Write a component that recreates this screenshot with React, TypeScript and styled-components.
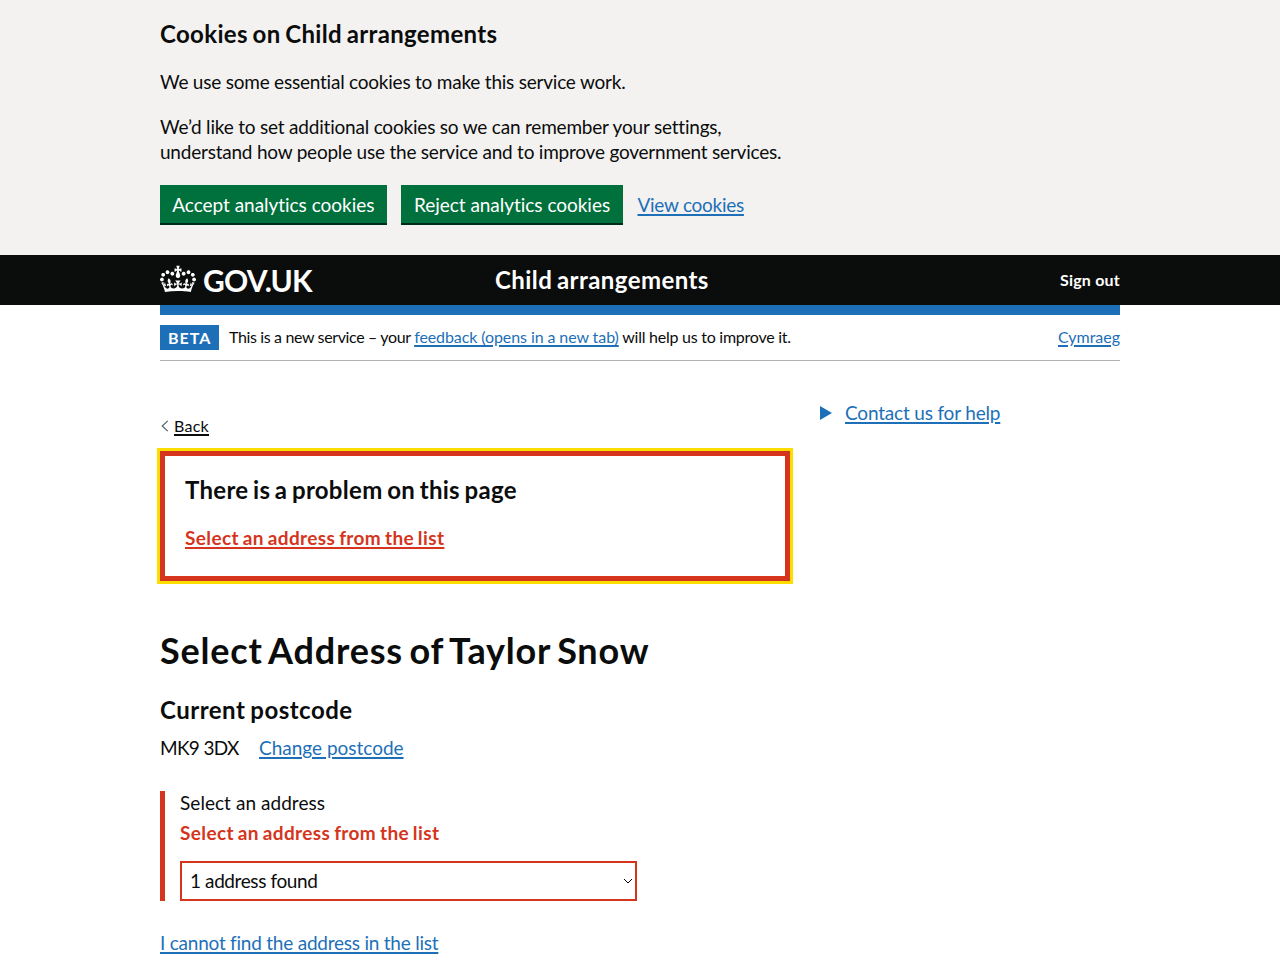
import React from "react";
import styled, { createGlobalStyle, css } from "styled-components";

const GlobalStyle = createGlobalStyle`
  body {
    margin: 0;
    background: #fff;
    color: #0b0c0c;
    font-family: Lato, "Liberation Sans", sans-serif;
    font-size: 19px;
    line-height: 25px;
    font-variant-ligatures: none;
    -webkit-font-smoothing: antialiased;
    overflow: hidden;
  }
`;

type Tracked = { $track?: number; $word?: number };
const tracking = css<Tracked>`
  letter-spacing: ${(p) => p.$track ?? 0}px;
  word-spacing: ${(p) => p.$word ?? 0}px;
`;

const Width = styled.div`
  width: 960px;
  margin: 0 auto;
`;

const CookieBanner = styled.section`
  box-sizing: border-box;
  height: 255px;
  padding-top: 19px;
  background: #f3f2f1;
`;

const Heading = styled.h2<Tracked>`
  margin: 0;
  font-size: 24px;
  line-height: 30px;
  font-weight: 700;
  white-space: nowrap;
  ${tracking}
`;

const Paragraph = styled.p<Tracked>`
  margin: 20px 0 0;
  white-space: nowrap;
  ${tracking}
`;

const Line = styled.span<Tracked>`
  display: block;
  ${tracking}
`;

const ButtonRow = styled.div`
  display: flex;
  align-items: flex-start;
  margin-top: 21px;
`;

const Button = styled.button<Tracked & { $width: number }>`
  box-sizing: border-box;
  width: ${(p) => p.$width}px;
  height: 38px;
  margin: 0 14.6px 0 0;
  padding: 0;
  border: 0;
  background: #00703c;
  box-shadow: 0 2px 0 #002d18;
  color: #fff;
  font: inherit;
  line-height: 25px;
  white-space: nowrap;
  ${tracking}
`;

const Link = styled.a<Tracked & { $tone?: string; $bold?: boolean }>`
  color: ${(p) => p.$tone ?? "#1d70b8"};
  font-weight: ${(p) => (p.$bold ? 700 : 400)};
  text-decoration: underline;
  text-decoration-thickness: 1.5px;
  text-underline-offset: 2px;
  white-space: nowrap;
  ${tracking}
`;

const ButtonLink = styled(Link)`
  padding-top: 7px;
`;

const Header = styled.header`
  background: #0b0c0c;
  color: #fff;
`;

const HeaderRow = styled(Width)`
  display: flex;
  align-items: center;
  height: 50px;
`;

const Logo = styled.div`
  display: flex;
  align-items: center;
  width: 335px;
`;

const CrownDrawing = styled.svg`
  margin-bottom: 2px;
`;

const LogoText = styled.span<Tracked>`
  margin-left: 7px;
  font-size: 30px;
  line-height: 30px;
  font-weight: 700;
  ${tracking}
`;

const ServiceName = styled.span<Tracked>`
  flex: 1;
  padding-bottom: 1px;
  font-size: 24px;
  line-height: 30px;
  font-weight: 700;
  ${tracking}
`;

const SignOut = styled.a<Tracked>`
  font-size: 16px;
  line-height: 20px;
  font-weight: 700;
  ${tracking}
`;

const BlueBar = styled(Width)`
  height: 10px;
  background: #1d70b8;
`;

const PhaseBanner = styled(Width)`
  display: flex;
  align-items: center;
  box-sizing: border-box;
  height: 46px;
  border-bottom: 1px solid #b1b4b6;
  font-size: 16px;
  line-height: 20px;
`;

const Tag = styled.strong`
  box-sizing: border-box;
  width: 59px;
  height: 25px;
  padding-left: 8px;
  margin-right: 10px;
  background: #1d70b8;
  color: #fff;
  line-height: 26px;
  letter-spacing: 1px;
`;

const PhaseText = styled.span<Tracked>`
  flex: 1;
  padding-bottom: 1px;
  white-space: pre;
  ${tracking}
`;

const Language = styled.span`
  padding-bottom: 1px;
`;

const Piece = styled.span<Tracked>`
  ${tracking}
`;

const Columns = styled(Width)`
  display: grid;
  grid-template-columns: 630px 300px;
  column-gap: 30px;
  padding-top: 40px;
`;

const BackLink = styled.div`
  display: flex;
  align-items: center;
  height: 20px;
  margin-top: 15px;
  font-size: 16px;
  line-height: 20px;
`;

const BackArrow = styled.svg`
  width: 8px;
  height: 12px;
  margin: 0 5px 0 1px;
`;

const ErrorSummary = styled.section`
  box-sizing: border-box;
  height: 130px;
  margin-top: 15px;
  padding: 19px 20px 20px;
  border: 5px solid #d4351c;
  outline: 3px solid #fd0;
`;

const ErrorItem = styled.div`
  margin-top: 20px;
`;

const Title = styled.h1<Tracked>`
  margin: 49px 0 0;
  font-size: 36px;
  line-height: 40px;
  font-weight: 700;
  ${tracking}
`;

const Subheading = styled(Heading)`
  margin-top: 25px;
`;

const Postcode = styled.div`
  display: flex;
  margin-top: 10px;
`;

const PostcodeValue = styled.span<Tracked>`
  width: 99px;
  ${tracking}
`;

const FormGroup = styled.div`
  display: flex;
  flex-direction: column;
  justify-content: flex-end;
  box-sizing: border-box;
  height: 110px;
  margin-top: 31px;
  padding-left: 15px;
  border-left: 5px solid #d4351c;
`;

const Label = styled.label<Tracked>`
  display: block;
  ${tracking}
`;

const ErrorMessage = styled.p<Tracked>`
  margin: 5px 0 16px;
  color: #d4351c;
  font-weight: 700;
  ${tracking}
`;

const SelectBox = styled.div`
  position: relative;
  width: 457.3px;
`;

const Select = styled.select<Tracked>`
  display: block;
  appearance: none;
  box-sizing: border-box;
  width: 100%;
  height: 40px;
  padding: 4px 8px 6px;
  border: 2px solid #d4351c;
  border-radius: 0;
  background: #fff;
  color: #0b0c0c;
  font: inherit;
  ${tracking}
`;

const SelectArrow = styled.svg`
  position: absolute;
  top: 17px;
  left: 443px;
  pointer-events: none;
`;

const NotFound = styled.div`
  margin-top: 29px;
`;

const Summary = styled.div`
  display: flex;
  align-items: flex-start;
  height: 25px;
  line-height: 23px;
`;

const Triangle = styled.span`
  margin: 5px 13px 0 0;
  border-style: solid;
  border-width: 7px 0 7px 12.124px;
  border-color: transparent transparent transparent #1d70b8;
`;

const Crown = () => (
  <CrownDrawing width="36" height="30" viewBox="0 0 132 97" fill="#fff" aria-hidden="true">
    <path d="M25 30.2c3.5 1.5 7.7-.2 9.1-3.7 1.5-3.6-.2-7.8-3.9-9.2-3.6-1.4-7.6.3-9.1 3.9-1.4 3.5.3 7.5 3.9 9zM9 39.5c3.6 1.5 7.8-.2 9.2-3.7 1.5-3.6-.2-7.8-3.9-9.1-3.6-1.5-7.6.2-9.1 3.8-1.4 3.5.3 7.5 3.8 9zM4.4 57.2c3.5 1.5 7.7-.2 9.1-3.8 1.5-3.6-.2-7.7-3.9-9.1-3.5-1.5-7.6.3-9.1 3.8-1.4 3.5.3 7.6 3.9 9.1zm38.3-21.4c3.5 1.5 7.7-.2 9.1-3.8 1.5-3.6-.2-7.7-3.9-9.1-3.6-1.5-7.6.3-9.1 3.8-1.3 3.6.4 7.7 3.9 9.1zm64.4-5.6c-3.6 1.5-7.8-.2-9.1-3.7-1.5-3.6.2-7.8 3.8-9.2 3.6-1.4 7.7.3 9.2 3.9 1.3 3.5-.4 7.5-3.9 9zm15.9 9.3c-3.6 1.5-7.7-.2-9.1-3.7-1.5-3.6.2-7.8 3.7-9.1 3.6-1.5 7.7.2 9.2 3.8 1.5 3.5-.3 7.5-3.8 9zm4.7 17.7c-3.6 1.5-7.8-.2-9.2-3.8-1.5-3.6.2-7.7 3.9-9.1 3.6-1.5 7.7.3 9.2 3.8 1.3 3.5-.4 7.6-3.9 9.1zM89.3 35.8c-3.6 1.5-7.8-.2-9.2-3.8-1.4-3.6.2-7.7 3.9-9.1 3.6-1.5 7.7.3 9.2 3.8 1.4 3.6-.3 7.7-3.9 9.1zM69.7 17.7l8.9 4.7V9.3l-8.9 2.8c-.2-.3-.5-.6-.9-.9L72.4 0H59.6l3.5 11.2c-.3.3-.6.5-.9.9l-8.8-2.8v13.1l8.8-4.7c.3.3.6.7.9.9l-5 15.4v.1c-.2.8-.4 1.6-.4 2.4 0 4.1 3.1 7.5 7 8.1h.2c.3 0 .7.1 1 .1.4 0 .7 0 1-.1h.2c4-.6 7.1-4.1 7.1-8.1 0-.8-.1-1.7-.4-2.4V34l-5.1-15.4c.4-.2.7-.6 1-.9zM66 92.8c16.9 0 32.8 1.1 47.1 3.2 4-16.9 8.9-26.7 14-33.5l-9.6-3.4c1 4.9 1.1 7.2 0 10.2-1.5-1.4-3-4.3-4.2-8.7L108.6 76c2.8-2 5-3.2 7.5-3.3-4.4 9.4-10 11.9-13.6 11.2-4.3-.8-6.3-4.6-5.6-7.9 1-4.7 5.7-5.9 8-.5 4.3-8.7-3-11.4-7.6-8.8 7.1-7.2 7.9-13.5 2.1-21.1-8 6.1-8.1 12.3-4.5 20.8-4.7-5.4-12.1-2.5-9.5 6.2 3.4-5.2 7.9-2 7.2 3.1-.6 4.3-6.4 7.8-13.5 7.2-10.3-.9-10.9-8-11.2-13.8 2.5-.5 7.1 1.8 11 7.3L80.2 60c-4.1 4.4-8 5.3-12.3 5.4 1.4-4.4 8-11.6 8-11.6H55.5s6.4 7.2 7.9 11.6c-4.2-.1-8-1-12.3-5.4l1.4 16.4c3.9-5.5 8.5-7.7 10.9-7.3-.3 5.8-.9 12.8-11.1 13.8-7.2.6-12.9-2.9-13.5-7.2-.7-5 3.8-8.3 7.1-3.1 2.7-8.7-4.6-11.6-9.4-6.2 3.7-8.5 3.6-14.7-4.6-20.8-5.8 7.6-5 13.9 2.2 21.1-4.7-2.6-11.9.1-7.7 8.8 2.3-5.5 7.1-4.2 8.1.5.7 3.3-1.3 7.1-5.7 7.9-3.5.7-9-1.8-13.5-11.2 2.5.1 4.7 1.3 7.5 3.3l-4.7-15.4c-1.2 4.4-2.7 7.2-4.3 8.7-1.1-3-.9-5.3 0-10.2l-9.5 3.4c5 6.9 9.9 16.7 14 33.5 14.8-2.1 30.8-3.2 47.7-3.2z" />
  </CrownDrawing>
);

export default function App() {
  return (
    <>
      <GlobalStyle />
      <CookieBanner>
        <Width>
          <Heading $track={0.34} $word={-1.5}>Cookies on Child arrangements</Heading>
          <Paragraph $track={-0.22}>We use some essential cookies to make this service work.</Paragraph>
          <Paragraph>
            <Line $track={-0.2}>We’d like to set additional cookies so we can remember your settings,</Line>
            <Line $track={-0.22}>understand how people use the service and to improve government services.</Line>
          </Paragraph>
          <ButtonRow>
            <Button $width={226.6} $track={-0.03}>Accept analytics cookies</Button>
            <Button $width={221.7} $track={-0.03}>Reject analytics cookies</Button>
            <ButtonLink $track={-0.27}>View cookies</ButtonLink>
          </ButtonRow>
        </Width>
      </CookieBanner>
      <Header>
        <HeaderRow>
          <Logo>
            <Crown />
            <LogoText $track={-0.8}>GOV.UK</LogoText>
          </Logo>
          <ServiceName $track={0.43} $word={-1.5}>Child arrangements</ServiceName>
          <SignOut $track={0.21}>Sign out</SignOut>
        </HeaderRow>
      </Header>
      <BlueBar />
      <PhaseBanner>
        <Tag>BETA</Tag>
        <PhaseText>
          <Piece $track={-0.36}>{"This is a new service – your "}</Piece>
          <Link $track={-0.09}>feedback (opens in a new tab)</Link>
          <Piece $track={-0.25}>{" will help us to improve it."}</Piece>
        </PhaseText>
        <Language>
          <Link $track={-0.03}>Cymraeg</Link>
        </Language>
      </PhaseBanner>
      <Columns>
        <main>
          <BackLink>
            <BackArrow viewBox="0 0 8 12" fill="none" stroke="#505a5f" strokeWidth="1.1">
              <path d="M6.8 .8 1.2 6l5.6 5.2" />
            </BackArrow>
            <Link $tone="#0b0c0c" $track={0.27}>Back</Link>
          </BackLink>
          <ErrorSummary>
            <Heading $track={0.29} $word={-1.5}>There is a problem on this page</Heading>
            <ErrorItem>
              <Link $tone="#d4351c" $bold $track={0.39} $word={-1.2}>Select an address from the list</Link>
            </ErrorItem>
          </ErrorSummary>
          <Title $track={0.81} $word={-3}>Select Address of Taylor Snow</Title>
          <Subheading $track={0.5} $word={-1.5}>Current postcode</Subheading>
          <Postcode>
            <PostcodeValue $track={-0.68}>MK9 3DX</PostcodeValue>
            <Link $track={-0.01}>Change postcode</Link>
          </Postcode>
          <FormGroup>
            <Label $track={0.05}>Select an address</Label>
            <ErrorMessage $track={0.39} $word={-1.2}>Select an address from the list</ErrorMessage>
            <SelectBox>
              <Select $track={-0.4}>
                <option>1 address found</option>
              </Select>
              <SelectArrow width="10" height="6" viewBox="0 0 10 6" fill="none" stroke="#000">
                <path d="M1 1 5 5l4-4" />
              </SelectArrow>
            </SelectBox>
          </FormGroup>
          <NotFound>
            <Link $track={-0.23}>I cannot find the address in the list</Link>
          </NotFound>
        </main>
        <aside>
          <Summary>
            <Triangle />
            <Link $track={-0.18}>Contact us for help</Link>
          </Summary>
        </aside>
      </Columns>
    </>
  );
}
